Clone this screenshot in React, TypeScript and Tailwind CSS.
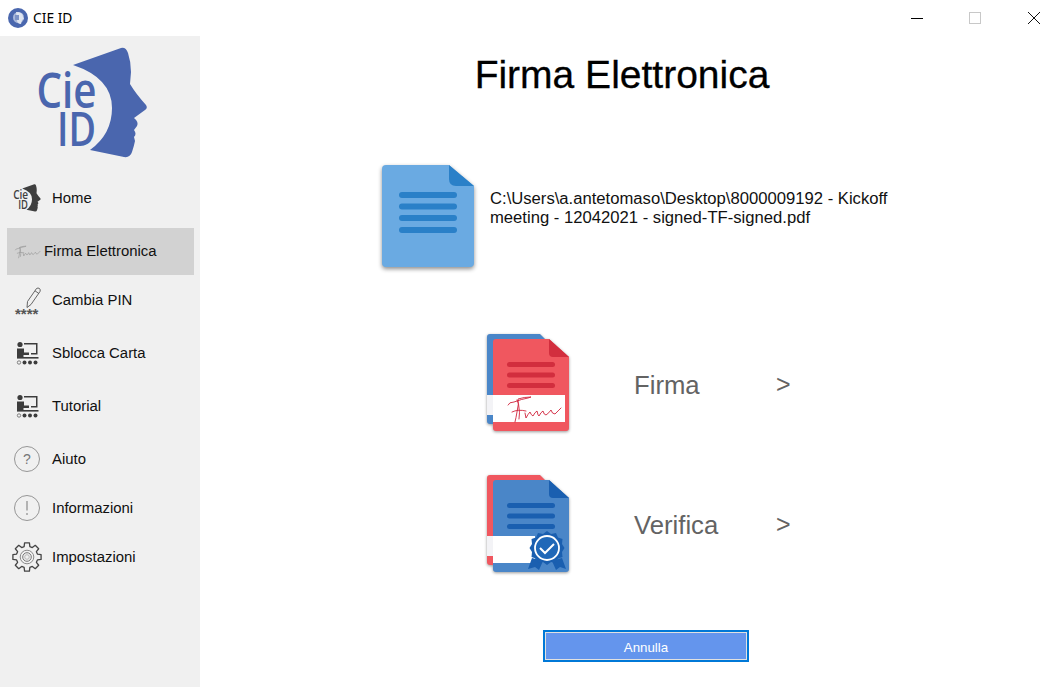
import React from "react";

const FACE = "M73 65 L121 48 Q126 47 128 53 Q131 62 131 72 L130 84 Q136 94 146 105 Q148 108 145 110 L134 118 Q139 122 137 126 L134 130 Q137 134 134 137 L135 141 Q134 146 132 152 Q130 158 124 157 L90 150 Q112 134 112 108 Q112 78 73 65 Z";
const SIG = "M508 405 Q509 402 514 402 Q522 399 528 398 L531 397 Q524 397 518 399 Q519 404 517 412 Q516 418 515 422 M517 400 Q519 403 519 408 Q520 412 519 419 M512 412 Q518 409 526 411 M525 413 L526 418 Q528 414 530 412 Q531 415 533 416 Q535 412 537 411 Q538 416 539 416 Q541 412 543 411 Q544 415 546 415 Q549 413 551 410 Q552 414 555 414 Q558 411 561 408";

function Logo({ size, color, className = "" }: { size: number; color: string; className?: string }) {
  return (
    <svg width={size} height={size} viewBox="36 47 112 112" className={className}>
      <path d={FACE} fill={color} />
      <text x="36.500" y="108" fontFamily="'Open Sans', sans-serif" fontWeight="600" fontSize="49" fill={color} textLength="60" lengthAdjust="spacingAndGlyphs">Cie</text>
      <text x="57" y="146" fontFamily="'Open Sans', sans-serif" fontWeight="600" fontSize="47" fill={color} textLength="39" lengthAdjust="spacingAndGlyphs">ID</text>
    </svg>
  );
}

function Presentation() {
  return (
    <svg width="24" height="24" viewBox="0 0 24 24" fill="#3c3c3c">
      <circle cx="4" cy="3.5" r="2.6" />
      <path d="M1 7.5 H8 V11.5 H13 V14 H7.5 V17 H1 Z" />
      <path d="M8 2 H21.5 V13.5 H15 V12 H20 V3.5 H8 Z" />
      <rect x="1" y="16" width="21.5" height="1.6" />
      <circle cx="3" cy="21.5" r="1.7" fill="none" stroke="#555" strokeWidth="0.7" />
      <circle cx="8.5" cy="21.5" r="2" />
      <circle cx="14" cy="21.5" r="2" />
      <circle cx="19.5" cy="21.5" r="2" />
    </svg>
  );
}

function Pencil() {
  return (
    <svg width="28" height="44" viewBox="0 0 28 44">
      <path d="M13 29.500 L13.500 23.500 L22.500 10.500 Q24 9.500 25.500 10.500 Q26.800 11.800 26 13.500 L17 26.500 Z M21 12.800 L24.800 15.500" fill="none" stroke="#555" strokeWidth="0.9" strokeLinejoin="round" />
      <text x="1" y="41" fontFamily="'Liberation Sans', sans-serif" fontWeight="700" fontSize="15" fill="#555">****</text>
    </svg>
  );
}

function SmallSignature() {
  return (
    <svg width="27" height="14" viewBox="505 395 58 29" fill="none" stroke="#999" strokeWidth="1.400" strokeLinecap="round" strokeLinejoin="round">
      <path d={SIG} />
    </svg>
  );
}

function Circled({ bang }: { bang?: boolean }) {
  return (
    <div className="flex h-[26px] w-[26px] items-center justify-center rounded-full border border-[#969696] font-['Liberation_Sans',sans-serif] text-[14px] text-[#777]">
      {bang ? (
        <svg width="4" height="14" viewBox="0 0 4 14">
          <path d="M2 0 V9.500 M2 12 V14" stroke="#777" strokeWidth="1" />
        </svg>
      ) : (
        "?"
      )}
    </div>
  );
}

function gearPath() {
  const cx = 16;
  const cy = 16;
  const parts: string[] = [];
  for (let i = 0; i < 8; i++) {
    const a = (i * Math.PI) / 4 - Math.PI / 2;
    const pt = (r: number, d: number) => `${(cx + r * Math.cos(a + d)).toFixed(2)} ${(cy + r * Math.sin(a + d)).toFixed(2)}`;
    parts.push(`${i === 0 ? "M" : "L"}${pt(10.800, -0.27)} L${pt(14.300, -0.17)} L${pt(14.300, 0.17)} L${pt(10.800, 0.27)}`);
  }
  return parts.join(" ") + " Z";
}

function Gear() {
  return (
    <svg width="32" height="32" viewBox="0 0 32 32" fill="none" stroke="#444" strokeWidth="1.300">
      <path d={gearPath()} strokeLinejoin="round" />
      <circle cx="16" cy="16" r="6.800" stroke="#8a8a8a" strokeWidth="1" />
      <circle cx="16" cy="16" r="4.300" stroke="#777" strokeWidth="1" />
      <circle cx="16" cy="16" r="2.300" stroke="#aaa" strokeWidth="0.8" />
    </svg>
  );
}

function Row({ icon, label, className, selected }: { icon: React.ReactNode; label: string; className: string; selected?: boolean }) {
  return (
    <div className={`flex items-center ${selected ? "mx-[7px] w-[187px] bg-[#d2d2d2]" : ""} ${className}`}>
      {icon}
      <span className="whitespace-nowrap text-[14.900px] text-[#111]">{label}</span>
    </div>
  );
}

function DocLines({ x1, x2, ys, w, c }: { x1: number; x2: number; ys: number[]; w: number; c: string }) {
  return (
    <>
      {ys.map((y) => (
        <line key={y} x1={x1} x2={x2} y1={y} y2={y} stroke={c} strokeWidth={w} strokeLinecap="round" />
      ))}
    </>
  );
}

function FileIcon() {
  return (
    <svg width="96" height="108" viewBox="380 163 96 108" className="drop-shadow-[0_2px_2px_rgba(0,0,0,0.45)]">
      <path d="M386 165 H449 L474 186 V263 Q474 267 470 267 H386 Q382 267 382 263 V169 Q382 165 386 165 Z" fill="#6aaae2" />
      <path d="M449 165 L474 186 H456 Q449 186 449 179 Z" fill="#2a80c8" />
      <DocLines x1={402} x2={454} ys={[195, 206.500, 218, 230]} w={6} c="#2a80c8" />
    </svg>
  );
}

function StackIcon({ front, fold, back, band, children }: { front: string; fold: string; back: string; band: number; children: React.ReactNode }) {
  return (
    <svg width="88" height="102" viewBox="484 332 88 102" className="drop-shadow-[0_1.500px_1.500px_rgba(0,0,0,0.4)]">
      <path d="M490 334 H540 L548 342 V424 H490 Q487 424 487 421 V337 Q487 334 490 334 Z" fill={back} />
      <rect x="487" y="395" width="6" height="20" fill="#f3f3f6" />
      <path d="M496 339 H549 L569 357 V428 Q569 431 566 431 H496 Q493 431 493 428 V342 Q493 339 496 339 Z" fill={front} />
      <path d="M549 339 L569 357 H553 Q549 357 549 353 Z" fill={fold} />
      <DocLines x1={509.500} x2={552.500} ys={[364.500, 375, 385.500]} w={5} c={fold} />
      <rect x="493" y="395" width={band} height="27" fill="#fff" />
      {children}
    </svg>
  );
}

function Action({ label, icon, className, textPad }: { label: string; icon: React.ReactNode; className: string; textPad: string }) {
  return (
    <div className={`flex items-center ${className}`}>
      {icon}
      <span className={`w-[142px] whitespace-nowrap text-[25.700px] text-[#636363] ${textPad}`}>{label}</span>
      <span className={`text-[25px] text-[#636363] ${textPad}`}>&gt;</span>
    </div>
  );
}

export default function App() {
  return (
    <div className="flex h-[687px] w-[1062px] flex-col overflow-hidden bg-white font-['Liberation_Sans',Arial,sans-serif]">
      <header className="flex h-[36px] shrink-0 items-center">
        <svg width="20" height="20" viewBox="0 0 20 20" className="ml-[8px]">
          <circle cx="10" cy="10" r="10" fill="#4a67ae" />
          <circle cx="10.500" cy="9.500" r="5.500" fill="#a9b8da" />
          <path d="M8 4 Q15 4 15 9 L16 11 L14 12 L13 16 Q9 16 9 12 Z" fill="#dfe5f1" />
          <path d="M7 7 H11 V12 H7 Z" fill="#7d93c6" />
        </svg>
        <span className="ml-[5px] font-['Noto_Sans',sans-serif] text-[13.800px] text-black">CIE ID</span>
        <div className="ml-auto flex items-center">
          <div className="h-px w-[12px] bg-black" />
          <div className="ml-[46px] h-[12px] w-[12px] border border-[#c8c8c8]" />
          <svg width="12" height="12" viewBox="0 0 12 12" className="ml-[47px] mr-[22px]">
            <path d="M0 0 L12 12 M12 0 L0 12" stroke="#111" strokeWidth="1" />
          </svg>
        </div>
      </header>

      <div className="flex min-h-0 flex-1">
        <aside className="flex w-[200px] shrink-0 flex-col bg-[#f0f0f0]">
          <Logo size={112} color="#4a66ae" className="ml-[36px] mt-[11px]" />
          <Row className="mt-[16px] h-[46px] pl-[13px]" label="Home" icon={<Logo size={28} color="#3f3f3f" className="mr-[11px]" />} />
          <Row selected className="mt-[7px] h-[47px] pl-[7px]" label="Firma Elettronica" icon={<span className="mr-[3px]"><SmallSignature /></span>} />
          <Row className="mt-[2px] h-[46px] pl-[14px]" label="Cambia PIN" icon={<span className="mr-[10px]"><Pencil /></span>} />
          <Row className="mt-[7px] h-[46px] pl-[16px]" label="Sblocca Carta" icon={<span className="mr-[12px]"><Presentation /></span>} />
          <Row className="mt-[7px] h-[46px] pl-[16px]" label="Tutorial" icon={<span className="mr-[12px]"><Presentation /></span>} />
          <Row className="mt-[7px] h-[46px] pl-[14px]" label="Aiuto" icon={<span className="mr-[12px]"><Circled /></span>} />
          <Row className="mt-[3px] h-[46px] pl-[14px]" label="Informazioni" icon={<span className="mr-[12px]"><Circled bang /></span>} />
          <Row className="mt-[3px] h-[46px] pl-[11px]" label="Impostazioni" icon={<span className="mr-[9px]"><Gear /></span>} />
        </aside>

        <main className="flex flex-1 flex-col">
          <h1 className="mt-[16px] pr-[18px] text-center text-[39px] font-normal leading-[46px] text-black [-webkit-text-stroke:0.3px_#000]">Firma Elettronica</h1>
          <div className="ml-[180px] mt-[65px] flex items-start">
            <FileIcon />
            <p className="ml-[14px] mt-[26px] w-[430px] text-[16.650px] leading-[19px] text-[#111]">
              C:\Users\a.antetomaso\Desktop\8000009192 - Kickoff
              <br />
              meeting - 12042021 - signed-TF-signed.pdf
            </p>
          </div>
          <Action
            className="ml-[284px] mt-[61px]"
            textPad="pt-[4px]"
            label="Firma"
            icon={
              <span className="mr-[62px] block h-[102px]">
                <StackIcon front="#f0575f" fold="#d22e3e" back="#4a86c8" band={72}>
                  <path d={SIG} fill="none" stroke="#d0243c" strokeWidth="0.9" strokeLinecap="round" strokeLinejoin="round" />
                </StackIcon>
              </span>
            }
          />
          <Action
            className="ml-[284px] mt-[39px]"
            textPad="pt-[2px]"
            label="Verifica"
            icon={
              <span className="mr-[62px] block h-[102px]">
                <StackIcon front="#4a86c8" fold="#1a5fb0" back="#f0575f" band={42}>
                  <path d="M532 417 L528 428 L535 426 L539 429 L543 420 Z M552 420 L556 429 L560 426 L566 428 L562 417 Z" fill="#1a5fb0" />
                  <path d="M547 390 L551 393 L556 392 L558 396.500 L562.500 398 L562 403 L564.500 407 L562 411 L562.500 416 L558 417.500 L556 422 L551 421 L547 424 L543 421 L538 422 L536 417.500 L531.500 416 L532 411 L529.500 407 L532 403 L531.500 398 L536 396.500 L538 392 L543 393 Z" fill="#1a5fb0" />
                  <circle cx="547" cy="407" r="12" fill="#2068b8" stroke="#fff" strokeWidth="1.800" />
                  <path d="M540 407 L545 412 L554 403" fill="none" stroke="#fff" strokeWidth="2" />
                </StackIcon>
              </span>
            }
          />
          <button className="ml-[343px] mt-[55px] h-[32px] w-[206px] border-2 border-[#0078d7] bg-[#6495ed] pt-[3px] text-[13.300px] text-white outline outline-1 -outline-offset-3 outline-[#e1e1e1]">
            Annulla
          </button>
        </main>
      </div>
    </div>
  );
}
